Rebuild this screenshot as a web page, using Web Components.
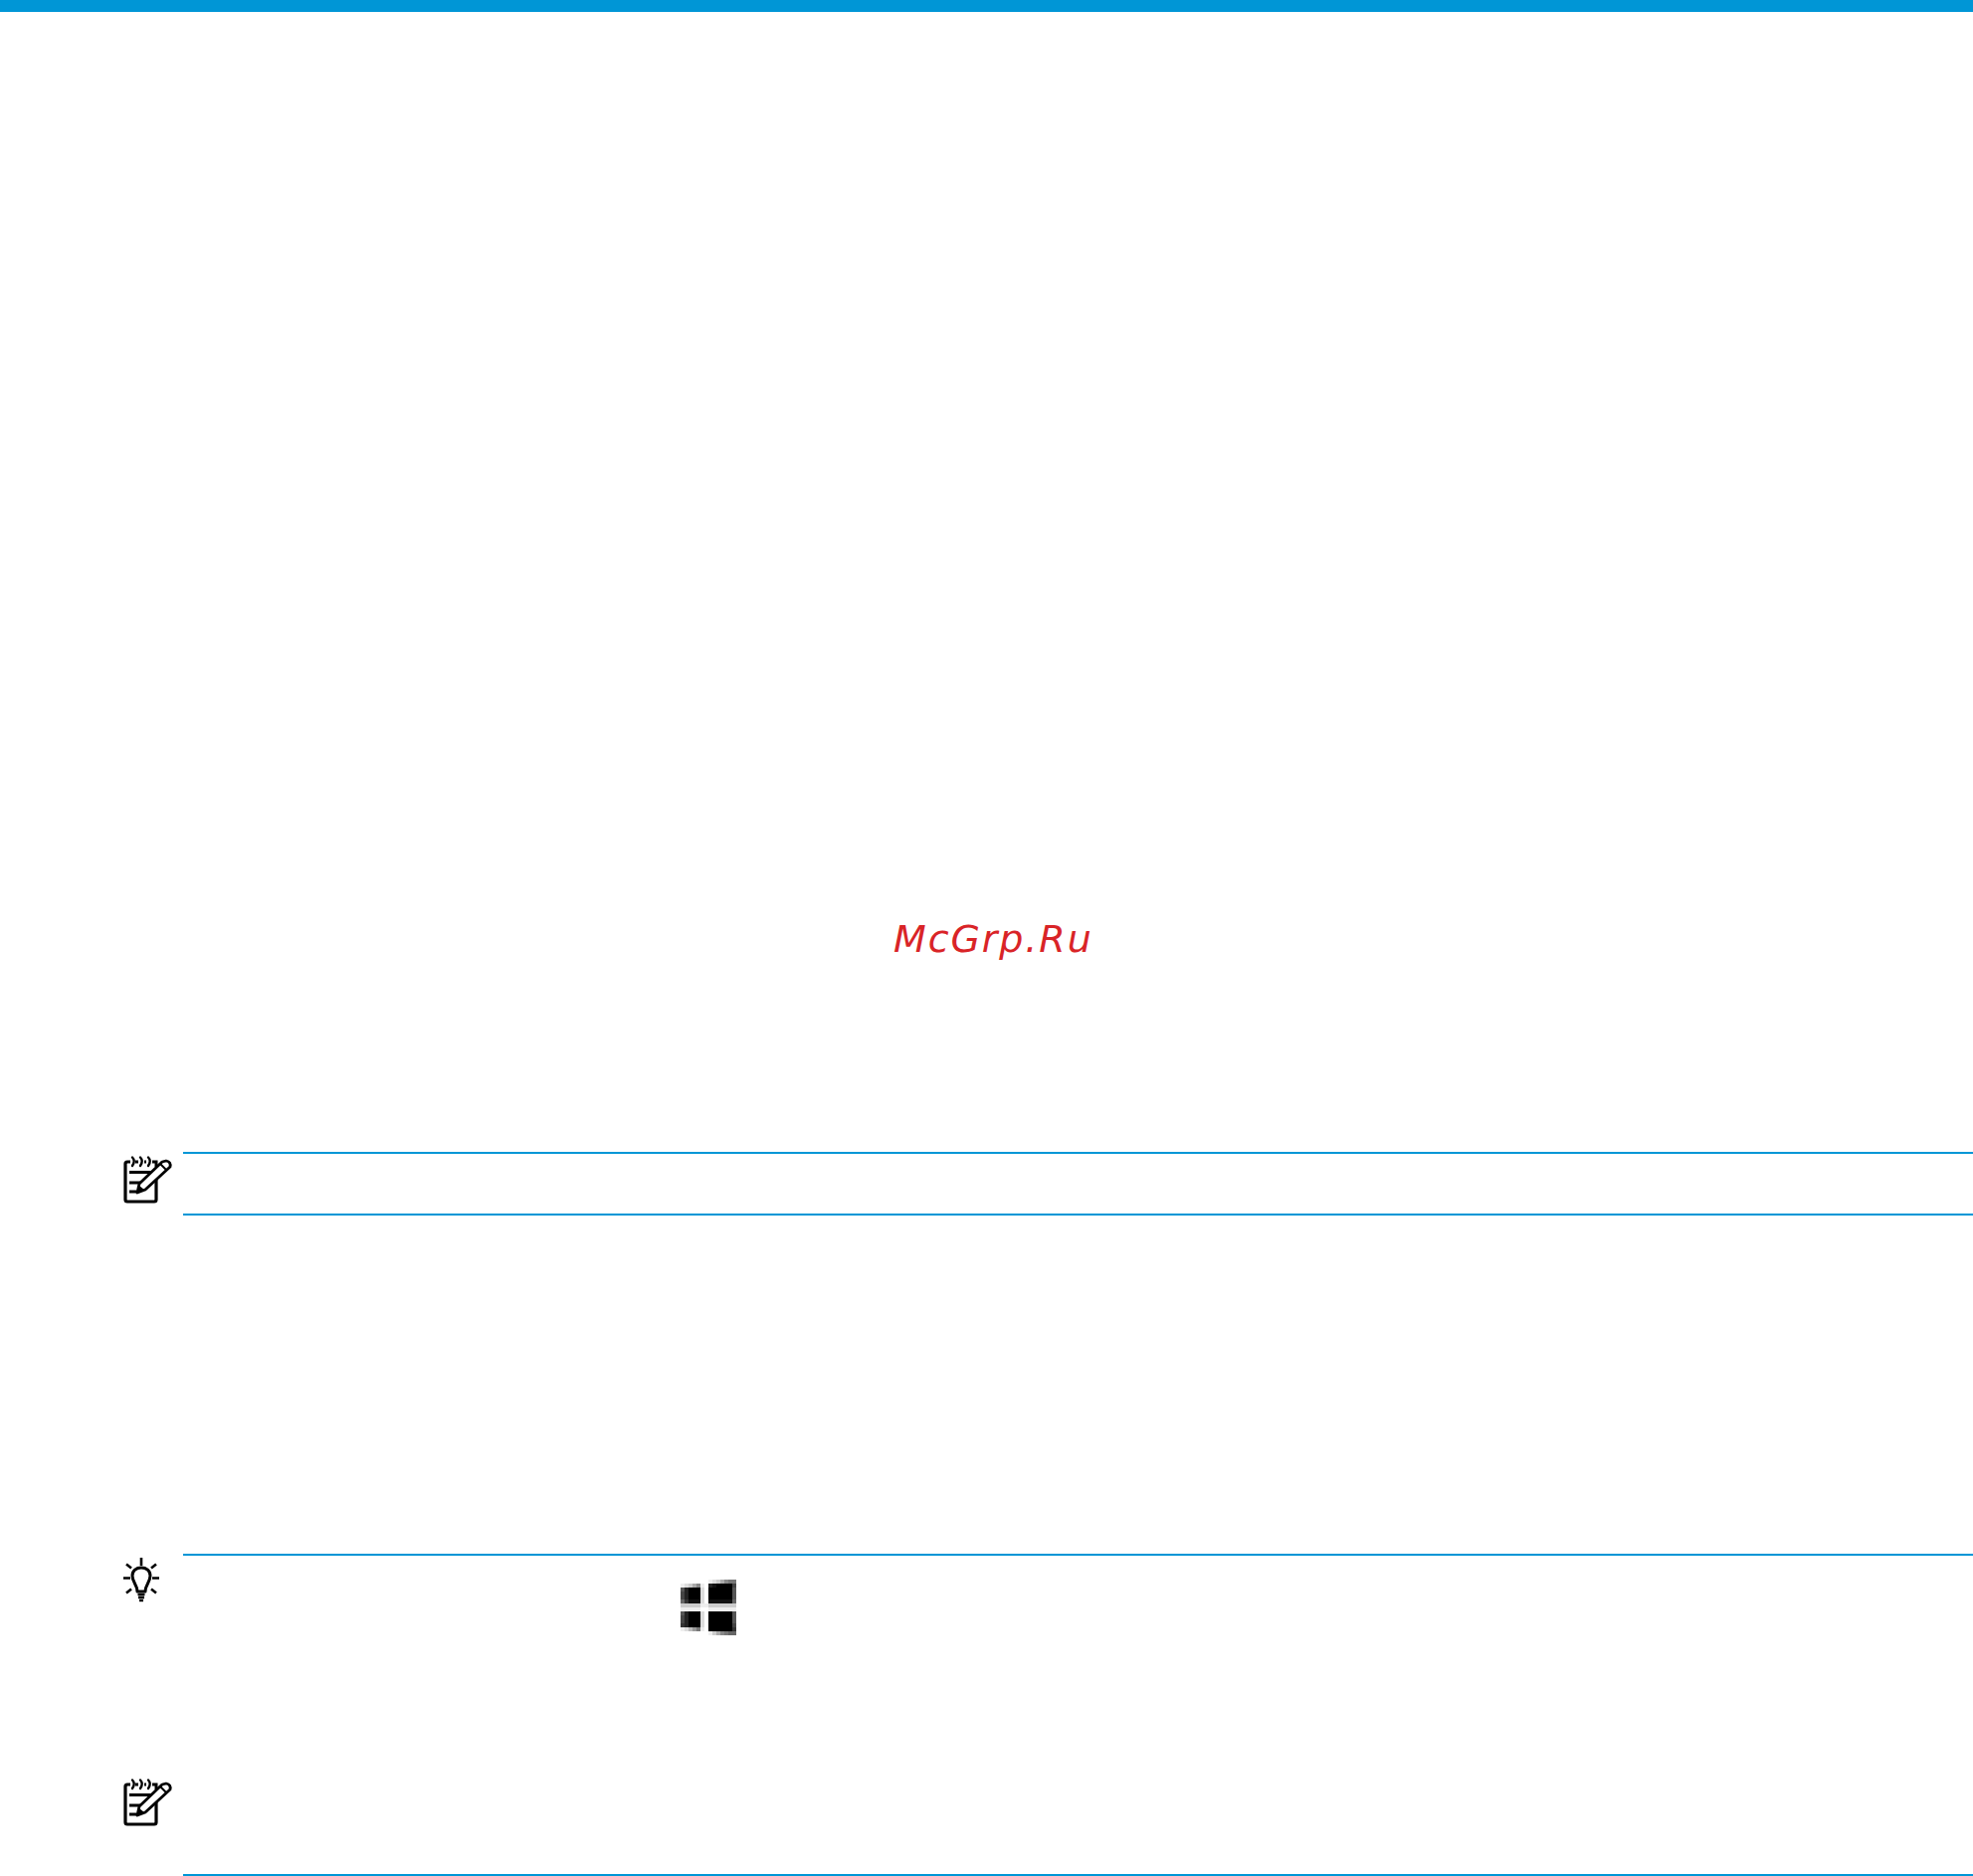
<!DOCTYPE html>
<html lang="ru">
<head>
<meta charset="utf-8">
<title>McGrp.Ru</title>
<style>
    html, body {
        margin: 0;
        background: #fff;
    }
    body {
        height: 1886px;
        overflow: hidden;
        font-family: "DejaVu Sans", sans-serif;
    }
</style>
</head>
<body>
<doc-page>
    <top-bar></top-bar>
    <water-mark>McGrp.Ru</water-mark>
    <call-out style="--top: 194px; --rule-height: 60px; --bottom: 2px; --pad: 3px">
        <note-icon slot="icon"></note-icon>
    </call-out>
    <call-out style="--top: 340px; --rule-height: 0; --bottom: 0">
        <tip-icon slot="icon"></tip-icon>
        <win-key></win-key>
    </call-out>
    <call-out plain style="--top: 139px; --rule-height: 99px; --bottom: 2px">
        <note-icon slot="icon"></note-icon>
    </call-out>
</doc-page>

<script>
/*
 * PAGE
 */
class DocPage extends HTMLElement {
    constructor() {
        super()
        this.attachShadow({ mode: 'open' })
        this.shadowRoot.innerHTML = `
<style>
    :host {
        display: flex;
        flex-direction: column;
        width: 1983px;
    }
</style>
<slot></slot>
`
    }
}
customElements.define('doc-page', DocPage)

class TopBar extends HTMLElement {
    constructor() {
        super()
        this.attachShadow({ mode: 'open' })
        this.shadowRoot.innerHTML = `
<style>
    :host {
        display: block;
        height: 12px;
        background: #0096d6;
    }
</style>
`
    }
}
customElements.define('top-bar', TopBar)

class WaterMark extends HTMLElement {
    constructor() {
        super()
        this.attachShadow({ mode: 'open' })
        this.shadowRoot.innerHTML = `
<style>
    :host {
        display: block;
        padding: 912px 0 0 898px;
        height: 40px;
        line-height: 40px;
        font-family: "DejaVu Sans", sans-serif;
        font-style: italic;
        font-size: 38px;
        letter-spacing: 1.9px;
        color: #d92427;
    }
</style>
<slot></slot>
`
    }
}
customElements.define('water-mark', WaterMark)

/*
 * CALLOUT: icon column and a ruled text column
 */
class CallOut extends HTMLElement {
    constructor() {
        super()
        this.attachShadow({ mode: 'open' })
        this.shadowRoot.innerHTML = `
<style>
    :host {
        display: grid;
        grid-template-columns: 184px 1fr;
        margin-top: var(--top);
    }
    :host([plain]) .body {
        border-top-color: transparent;
    }
    .side {
        padding: var(--pad, 4px) 0 0 124px;
    }
    .body {
        border-top: 2px solid #0096d6;
        border-bottom: var(--bottom) solid #0096d6;
        min-height: var(--rule-height);
    }
</style>
<div class="side"><slot name="icon"></slot></div>
<div class="body"><slot></slot></div>
`
    }
}
customElements.define('call-out', CallOut)

/*
 * ICONS
 */
class NoteIcon extends HTMLElement {
    constructor() {
        super()
        this.attachShadow({ mode: 'open' })
        this.shadowRoot.innerHTML = `
<style>
    :host { display: block; width: 50px; height: 50px; }
    svg { display: block; }
</style>
<svg width="50" height="50" viewBox="24 21 50 50" fill="none" stroke="#000">
    <filter id="soft"><feGaussianBlur stdDeviation="0.35"/></filter>
    <g filter="url(#soft)">
        <path stroke-width="3.2" stroke-linejoin="round" d="M31 28H28Q26 28 26 30V66Q26 68 28 68H55Q57 68 57 66V46"/>
        <path stroke-width="3" d="M36 28H39M45 28H47M53 28H57V33"/>
        <path stroke-width="2.4" stroke-linecap="round" d="M33 23.5Q36.5 27 33 32M41 23.5Q44.5 27 41 32M49 23.5Q52.5 27 49 32"/>
        <path stroke-width="3" d="M30 38.5H52M30 49H42M30 58H37"/>
        <path stroke-width="2.8" stroke-linejoin="round" fill="#fff" d="M38 59L40 50L63 28L67 27Q72 28 71 33L46 56Z"/>
        <path fill="#000" stroke="none" d="M37 60L40 52L45 56Z"/>
        <path stroke-width="2" d="M61 30L67 36"/>
    </g>
</svg>
`
    }
}
customElements.define('note-icon', NoteIcon)

class TipIcon extends HTMLElement {
    constructor() {
        super()
        this.attachShadow({ mode: 'open' })
        this.shadowRoot.innerHTML = `
<style>
    :host { display: block; width: 36px; height: 46px; }
    svg { display: block; }
</style>
<svg width="36" height="46" viewBox="24 16 36 46" fill="none" stroke="#000">
    <filter id="soft"><feGaussianBlur stdDeviation="0.35"/></filter>
    <g filter="url(#soft)">
        <path stroke-width="3" stroke-linejoin="round" d="M38 50C38 43 33 41 33 34C33 29 37 26 42 26C47 26 51 29 51 34C51 41 46 43 46 50Z"/>
        <path stroke-width="2.6" d="M42 16V24M24 36.5H31M53 36.5H60M27 22.5L32 26.5M57 22.5L52 26.5M27 51.5L32 47.5M57 51.5L52 47.5"/>
        <path stroke-width="2.4" d="M38.5 53H45.5M39 56H45"/>
        <path stroke-width="2.4" d="M40 59H44"/>
    </g>
</svg>
`
    }
}
customElements.define('tip-icon', TipIcon)

// the key is a low-res raster in the source, one hex digit of grey per cell
const WIN_CELLS = [
    'fffffffedca877',
    'edca8ef2100004',
    '52000df0000005',
    '42000df0000005',
    '42000df0000005',
    '63111df1111116',
    'ccccceeccccccc',
    'eeeeeffeeeeeee',
    '52000df0000005',
    '42000df0000005',
    '42000df0000005',
    '32000df0000004',
    'edb97ef0000003',
    'fffffffeca8766'
]

class WinKey extends HTMLElement {
    constructor() {
        super()
        let rects = ''
        WIN_CELLS.forEach((row, y) => {
            ;[...row].forEach((c, x) => {
                if (c !== 'f') rects += `<rect x="${x}" y="${y}" width="1" height="1" fill="#${c}${c}${c}"/>`
            })
        })
        this.attachShadow({ mode: 'open' })
        this.shadowRoot.innerHTML = `
<style>
    :host {
        display: block;
        width: 56px;
        height: 56px;
        margin: 24px 0 0 500px;
    }
    svg { display: block; }
</style>
<svg width="56" height="56" viewBox="0 0 14 14" shape-rendering="crispEdges">${rects}</svg>
`
    }
}
customElements.define('win-key', WinKey)
</script>
</body>
</html>
